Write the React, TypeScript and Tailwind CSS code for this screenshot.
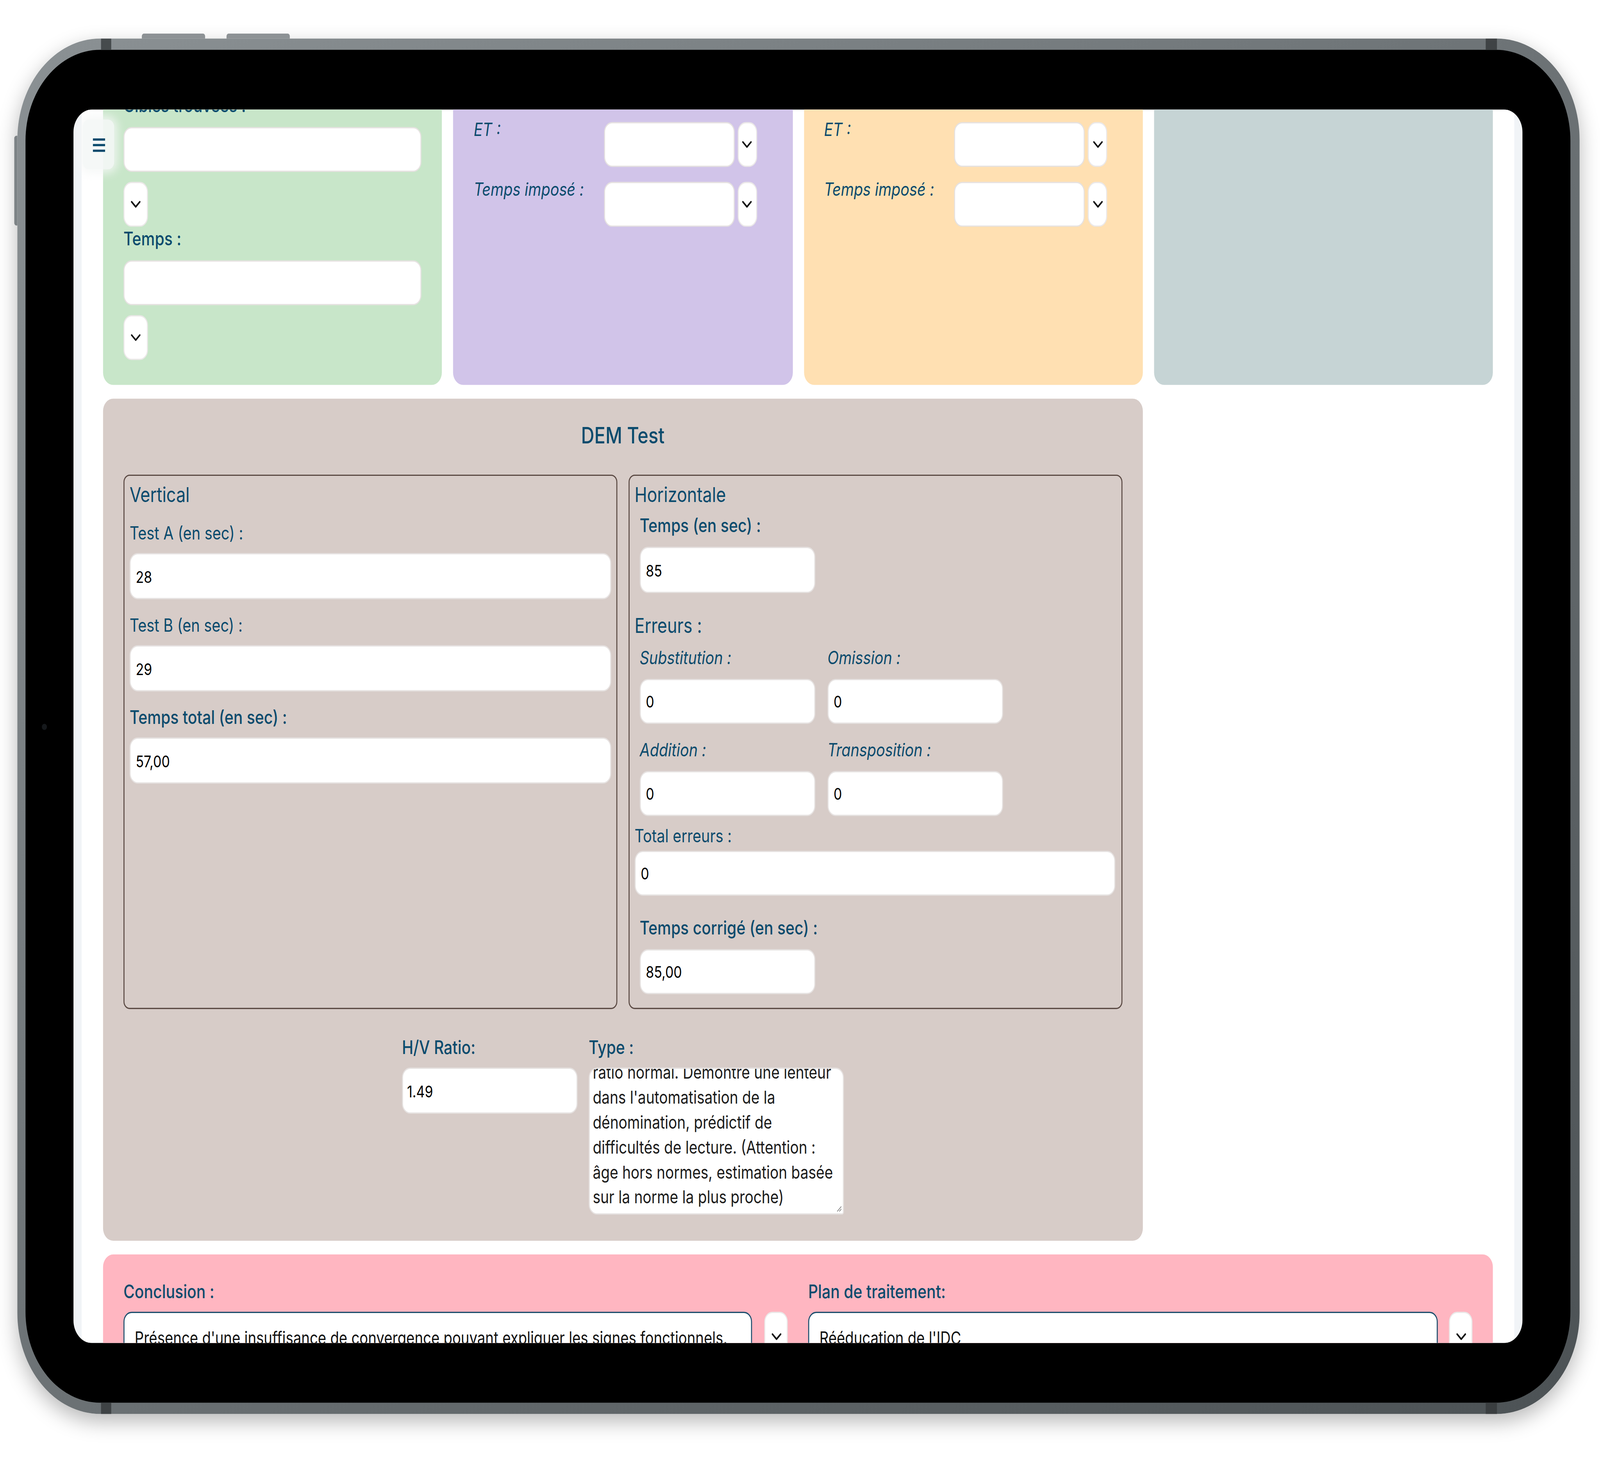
import React, { useEffect, useState } from 'react';

const label = 'text-[14.5px] leading-[20px] text-[#0b4b6d]';
const labelMed = 'text-[15px] leading-[20px] font-medium text-[#0b4b6d]';
const labelIt = 'text-[14.5px] italic text-[#0b4b6d] whitespace-nowrap';
const title = 'text-[16.5px] leading-[20px] text-[#0b4b6d]';
const field =
  'block rounded-[8px] border border-[#e6e2e1] bg-white px-[5px] text-[13px] text-black outline-none';

function Chevron() {
  return (
    <svg width="10" height="6" viewBox="0 0 10 6" fill="none">
      <path d="M1 1l4 4 4-4" stroke="#111" strokeWidth="1.4" strokeLinecap="round" strokeLinejoin="round" />
    </svg>
  );
}

function Field({ value = '', className = '' }: { value?: string; className?: string }) {
  return <input readOnly value={value} className={`${field} ${className}`} />;
}

function SmallSelect({ className }: { className: string }) {
  return (
    <div className={`flex shrink-0 items-center justify-center rounded-[8px] border border-[#ebe8e8] bg-white ${className}`}>
      <Chevron />
    </div>
  );
}

function InlineSelectRow({ text }: { text: string }) {
  return (
    <div className="flex items-start">
      <div className={`w-[127.5px] shrink-0 leading-[11px] ${labelIt}`}>{text}</div>
      <Field className="h-[36px] w-[128px] shrink-0" />
      <SmallSelect className="ml-[3px] h-[36px] w-[19px]" />
    </div>
  );
}

function Vertical() {
  return (
    <div className="rounded-[6px] border border-[#5b4a44] px-[5px] pt-[5px]">
      <div className={title}>Vertical</div>
      <div className={`mt-[11px] ${label}`}>Test A (en sec) :</div>
      <Field value="28" className="mt-[6px] h-[37px] w-full" />
      <div className={`mt-[11px] ${label}`}>Test B (en sec) :</div>
      <Field value="29" className="mt-[6px] h-[37px] w-full" />
      <div className={`mt-[11px] ${labelMed}`}>Temps total (en sec) :</div>
      <Field value="57,00" className="mt-[6px] h-[37px] w-full" />
    </div>
  );
}

function Horizontale() {
  return (
    <div className="rounded-[6px] border border-[#5b4a44] pl-[5px] pr-[6px] pt-[5px] pb-[11px]">
      <div className={title}>Horizontale</div>
      <div className="mt-[5px] pl-[5px]">
        <div className={labelMed}>Temps (en sec) :</div>
        <Field value="85" className="mt-[7px] h-[37px] w-[172px]" />
      </div>
      <div className={`mt-[16px] ${title}`}>Erreurs :</div>
      <div className="mt-[6px] grid w-[361px] grid-cols-[172px_172px] gap-x-[12px] pl-[5px]">
        <div className={`leading-[20px] ${labelIt}`}>Substitution :</div>
        <div className={`leading-[20px] ${labelIt}`}>Omission :</div>
        <Field value="0" className="mt-[7px] h-[36px] w-full" />
        <Field value="0" className="mt-[7px] h-[36px] w-full" />
        <div className={`mt-[11px] leading-[20px] ${labelIt}`}>Addition :</div>
        <div className={`mt-[11px] leading-[20px] ${labelIt}`}>Transposition :</div>
        <Field value="0" className="mt-[7px] h-[36px] w-full" />
        <Field value="0" className="mt-[7px] h-[36px] w-full" />
      </div>
      <div className={`mt-[6px] ${label}`}>Total erreurs :</div>
      <Field value="0" className="mt-[2px] h-[36px] w-full" />
      <div className="mt-[16px] pl-[5px]">
        <div className={labelMed}>Temps corrigé (en sec) :</div>
        <Field value="85,00" className="mt-[7px] h-[36px] w-[172px]" />
      </div>
    </div>
  );
}

const typeLines = [
  'ratio normal. Démontre une lenteur',
  "dans l'automatisation de la",
  'dénomination, prédictif de',
  'difficultés de lecture. (Attention :',
  'âge hors normes, estimation basée',
  'sur la norme la plus proche)',
];

function DemTest() {
  return (
    <div className="col-span-3 rounded-[10px] bg-[#d7ccc8] px-[20px] pt-[20px] pb-[21px]">
      <div className="text-center text-[18px] leading-[20px] font-medium text-[#0b4b6d]">DEM Test</div>
      <div className="mt-[21px] grid grid-cols-2 gap-[11px]">
        <Vertical />
        <Horizontale />
      </div>
      <div className="mt-[21px] flex justify-center gap-[11px]">
        <div className="w-[172px]">
          <div className={labelMed}>H/V Ratio:</div>
          <Field value="1.49" className="mt-[6px] h-[37px] w-full pl-[4px]" />
        </div>
        <div className="w-[250px]">
          <div className={labelMed}>Type :</div>
          <div className="relative mt-[6px] h-[118px] overflow-hidden rounded-[8px] rounded-br-[2px] border border-[#e6e2e1] bg-white px-[3px]">
            <div className="-mt-[7px] text-[14.2px] leading-[20px] text-[#1b1b1b]">
              {typeLines.map((l) => (
                <div key={l} className="whitespace-nowrap">
                  {l}
                </div>
              ))}
            </div>
            <svg className="absolute bottom-[1px] right-[1px]" width="5" height="5" viewBox="0 0 5 5">
              <path d="M4.5 0.5L0.5 4.5M4.5 2.5L2.5 4.5" stroke="#888" strokeWidth="0.7" />
            </svg>
          </div>
        </div>
      </div>
    </div>
  );
}

function PinkBlock() {
  return (
    <div className="col-span-4 rounded-[10px] bg-[#ffb6c1] px-[20px] pt-[20px] pb-[20px]">
      <div className="grid grid-cols-2 gap-[20px]">
        <div>
          <div className={labelMed}>Conclusion :</div>
          <div className="mt-[6px] flex gap-[12px]">
            <div className="flex h-[40px] min-w-0 flex-1 items-center overflow-hidden whitespace-nowrap rounded-[8px] border border-[#1d4f6e] bg-white px-[10px] text-[14px] text-[#111]">
              Présence d'une insuffisance de convergence pouvant expliquer les signes fonctionnels.
            </div>
            <SmallSelect className="h-[40px] w-[23px]" />
          </div>
        </div>
        <div>
          <div className={labelMed}>Plan de traitement:</div>
          <div className="mt-[6px] flex gap-[11px]">
            <div className="flex h-[40px] min-w-0 flex-1 items-center rounded-[8px] border border-[#1d4f6e] bg-white px-[10px] text-[14px] text-[#111]">
              Rééducation de l'IDC
            </div>
            <SmallSelect className="h-[40px] w-[23px]" />
          </div>
        </div>
      </div>
    </div>
  );
}

function Screen() {
  return (
    <div className="relative h-[990px] w-[1420px] overflow-hidden rounded-[18px] bg-[#f1f4f7]">
      <div className="mx-[8px] flex h-full flex-col bg-white px-[21px]">
        <div className="-mt-[33px] grid grid-cols-4 gap-[11px]">
          {/* Tests panel */}
          <div className="rounded-[10px] bg-[#c8e6c9] px-[20px] pt-[20px] pb-[20px]">
            <div className={labelMed}>Cibles trouvées :</div>
            <Field className="mt-[7px] h-[36px] w-full" />
            <SmallSelect className="mt-[8px] h-[36px] w-[24px]" />
            <div className={labelMed}>Temps :</div>
            <Field className="mt-[7px] h-[36px] w-full" />
            <SmallSelect className="mt-[8px] h-[36px] w-[24px]" />
          </div>
          <div className="flex flex-col gap-[12px] rounded-[10px] bg-[#d1c4e9] px-[20px] pt-[43px]">
            <InlineSelectRow text="ET :" />
            <InlineSelectRow text="Temps imposé :" />
          </div>
          <div className="flex flex-col gap-[12px] rounded-[10px] bg-[#ffe0b2] px-[20px] pt-[43px]">
            <InlineSelectRow text="ET :" />
            <InlineSelectRow text="Temps imposé :" />
          </div>
          <div className="rounded-[10px] bg-[#c6d4d5]" />
          <DemTest />
          <PinkBlock />
        </div>
      </div>
      <div className="absolute left-[9px] top-[8px] flex h-[40px] w-[31px] items-center justify-center rounded-[6px] bg-[#f4f7f6]/90 shadow-[0_0_8px_3px_rgba(244,247,246,0.85)]">
        <svg width="12" height="11" viewBox="0 0 12 11">
          <path d="M0 1h12M0 5.5h12M0 10h12" stroke="#0b4b6d" strokeWidth="1.8" />
        </svg>
      </div>
    </div>
  );
}

export default function App() {
  // the mockup is drawn on a 1568 x 1176 grid and stretched to fill the window
  const measure = () => ({ x: window.innerWidth / 1568, y: window.innerHeight / 1176 });
  const [scale, setScale] = useState(measure);
  useEffect(() => {
    const onResize = () => setScale(measure());
    window.addEventListener('resize', onResize);
    return () => window.removeEventListener('resize', onResize);
  }, []);

  return (
    <div className="h-screen w-screen overflow-hidden bg-white">
      <div
        className="h-[1176px] w-[1568px] origin-top-left bg-white pl-[17px] pt-[31px] [font-family:Inter,'Noto_Sans',sans-serif]"
        style={{ transform: `scale(${scale.x}, ${scale.y})` }}
      >
        <div className="relative h-[1104px] w-[1531px] rounded-[81px] bg-gradient-to-br from-[#8b9194] via-[#6c7275] to-[#4c5255] pt-[9px] pb-[9px] pl-[8px] pr-[9px] shadow-[0_6px_18px_rgba(0,0,0,0.28)]">
          {/* hardware details */}
          <div className="absolute -top-[4px] left-[122px] h-[4px] w-[62px] rounded-t-[2px] bg-[#8d9295]" />
          <div className="absolute -top-[4px] left-[205px] h-[4px] w-[62px] rounded-t-[2px] bg-[#8d9295]" />
          <div className="absolute -left-[3px] top-[78px] h-[72px] w-[3px] rounded-l-[2px] bg-[#7d8386]" />
          <div className="absolute left-[82px] top-0 h-[9px] w-[10px] bg-[#464b4d]" />
          <div className="absolute right-[81px] top-0 h-[9px] w-[11px] bg-[#3f4345]" />
          <div className="absolute bottom-0 left-[82px] h-[9px] w-[10px] bg-[#3f4345]" />
          <div className="absolute bottom-0 right-[81px] h-[9px] w-[11px] bg-[#3a3e40]" />
          <div className="h-full w-full rounded-[73px] bg-black px-[47px] py-[48px]">
            <Screen />
          </div>
          <div className="absolute left-[24px] top-[550px] h-[5px] w-[5px] rounded-full bg-[#15181b]" />
        </div>
      </div>
    </div>
  );
}
